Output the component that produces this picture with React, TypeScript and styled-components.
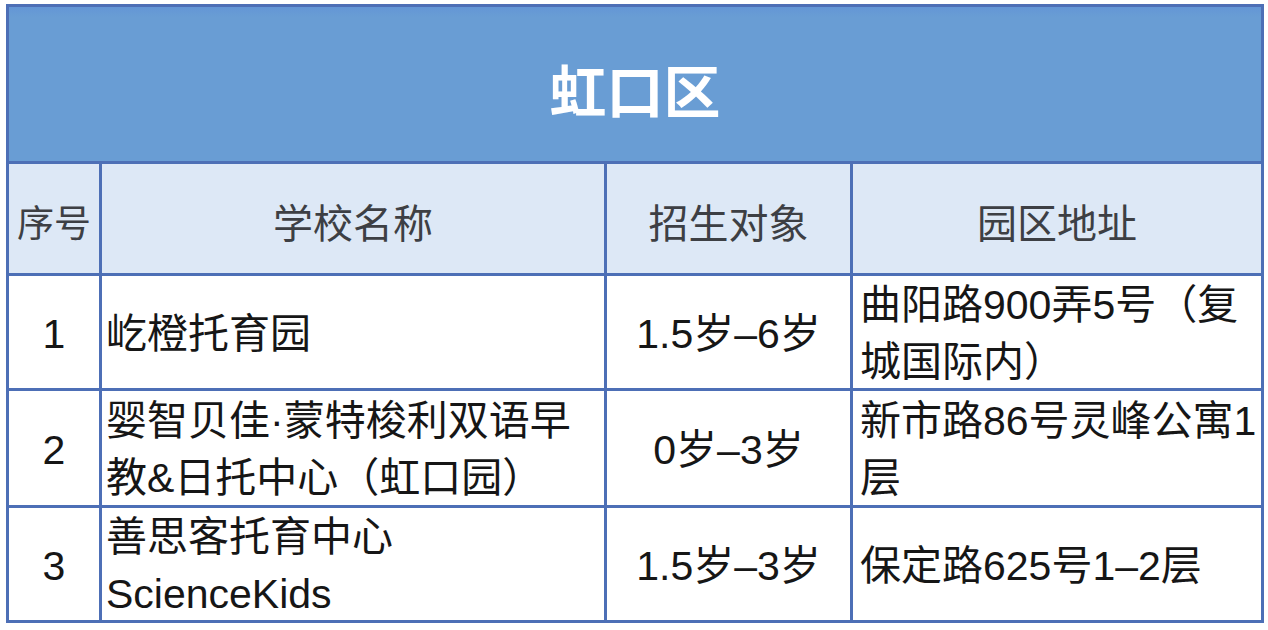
import styled, { createGlobalStyle } from 'styled-components';

const GlobalStyle = createGlobalStyle`
  html, body {
    margin: 0;
    padding: 0;
    background: #ffffff;
  }
  body {
    font-family: "Liberation Sans", "Noto Sans CJK SC", sans-serif;
  }
`;

const Page = styled.div`
  width: 1268px;
  height: 630px;
  box-sizing: border-box;
  padding: 4px 0 0 6px;
  background: #ffffff;
`;

const Sheet = styled.div`
  display: grid;
  grid-template-columns: 90px 502px 243px 408px;
  grid-template-rows: 154px 109px 112px 114px 112px;
  gap: 3px;
  padding: 3px;
  width: fit-content;
  background: #4d6fb6;
`;

const TitleCell = styled.div`
  grid-column: 1 / -1;
  display: flex;
  align-items: center;
  justify-content: center;
  padding-top: 8px;
  box-sizing: border-box;
  background: linear-gradient(#6496d6 0px, #699dd4 10px, #699dd4 100%);
  color: #ffffff;
  font-family: "Noto Sans CJK SC", sans-serif;
  font-size: 57px;
  font-weight: 700;
`;

const HeadCell = styled.div<{ $tight?: boolean }>`
  display: flex;
  align-items: center;
  justify-content: center;
  background: #dde8f6;
  color: #3d3f44;
  font-family: "Noto Sans CJK SC", sans-serif;
  font-size: ${p => (p.$tight ? '37px' : '40px')};
  font-weight: 400;
  padding-top: 4px;
  box-sizing: border-box;
  white-space: nowrap;
`;

const Cell = styled.div<{ $align?: 'left' | 'center'; $pad?: number }>`
  display: flex;
  flex-direction: column;
  justify-content: center;
  align-items: ${p => (p.$align === 'left' ? 'flex-start' : 'center')};
  padding: 4px ${p => p.$pad ?? 0}px 0;
  box-sizing: border-box;
  background: #ffffff;
  color: #161616;
  font-size: 41px;
  line-height: 57px;
  white-space: nowrap;
`;

const Line = styled.span`
  display: block;
`;

const rows = [
  {
    no: '1',
    name: ['屹橙托育园'],
    age: '1.5岁–6岁',
    addr: ['曲阳路900弄5号（复', '城国际内）'],
  },
  {
    no: '2',
    name: ['婴智贝佳·蒙特梭利双语早', '教&日托中心（虹口园）'],
    age: '0岁–3岁',
    addr: ['新市路86号灵峰公寓1', '层'],
  },
  {
    no: '3',
    name: ['善思客托育中心', 'ScienceKids'],
    age: '1.5岁–3岁',
    addr: ['保定路625号1–2层'],
  },
];

export default function App() {
  return (
    <Page>
      <GlobalStyle />
      <Sheet>
        <TitleCell>虹口区</TitleCell>
        <HeadCell $tight>序号</HeadCell>
        <HeadCell>学校名称</HeadCell>
        <HeadCell>招生对象</HeadCell>
        <HeadCell>园区地址</HeadCell>
        {rows.map(r => [
          <Cell key={r.no + 'n'}>{r.no}</Cell>,
          <Cell key={r.no + 's'} $align="left" $pad={4}>
            {r.name.map(t => (
              <Line key={t}>{t}</Line>
            ))}
          </Cell>,
          <Cell key={r.no + 'a'}>{r.age}</Cell>,
          <Cell key={r.no + 'd'} $align="left" $pad={7}>
            {r.addr.map(t => (
              <Line key={t}>{t}</Line>
            ))}
          </Cell>,
        ])}
      </Sheet>
    </Page>
  );
}
